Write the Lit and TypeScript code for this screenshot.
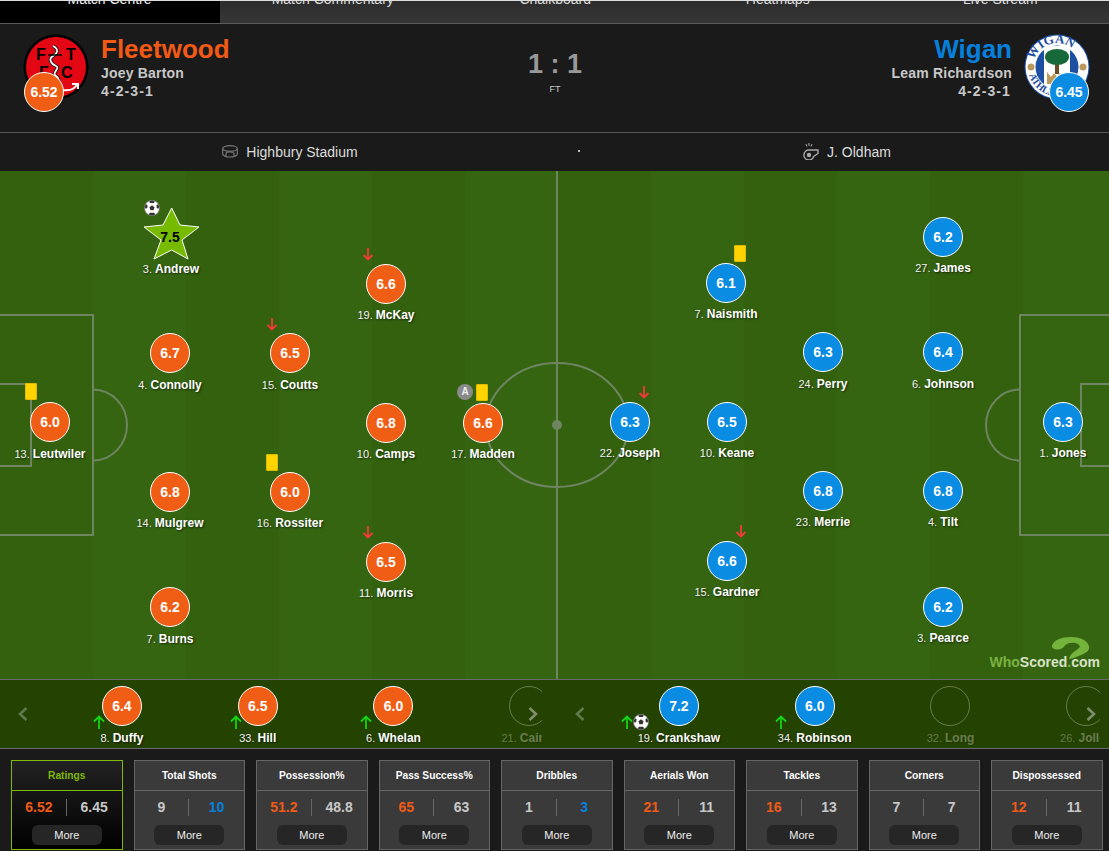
import { LitElement, css, html, svg } from "lit";
import { customElement } from "lit/decorators.js";

type Side = "home" | "away";

interface Player {
  no: number;
  name: string;
  rating: string;
  x: number;
  y: number;
  labelY: number;
  side: Side;
  star?: boolean;
  goal?: boolean;
  card?: [number, number];
  captain?: [number, number];
  off?: [number, number];
}

interface Sub {
  no: number;
  name: string;
  rating?: string;
  side: Side;
  arrow?: number;
  goal?: boolean;
  faded?: boolean;
}

const PITCH_TOP = 171;

const players: Player[] = [
  { no: 13, name: "Leutwiler", rating: "6.0", x: 50, y: 422, labelY: 454, side: "home", card: [31, 391] },
  { no: 3, name: "Andrew", rating: "7.5", x: 171, y: 237, labelY: 269, side: "home", star: true, goal: true },
  { no: 4, name: "Connolly", rating: "6.7", x: 170, y: 353, labelY: 385, side: "home" },
  { no: 14, name: "Mulgrew", rating: "6.8", x: 170, y: 492, labelY: 523, side: "home" },
  { no: 7, name: "Burns", rating: "6.2", x: 170, y: 607, labelY: 639, side: "home" },
  { no: 15, name: "Coutts", rating: "6.5", x: 290, y: 353, labelY: 385, side: "home", off: [272, 324] },
  { no: 16, name: "Rossiter", rating: "6.0", x: 290, y: 492, labelY: 523, side: "home", card: [272, 462] },
  { no: 19, name: "McKay", rating: "6.6", x: 386, y: 284, labelY: 315, side: "home", off: [368, 254] },
  { no: 10, name: "Camps", rating: "6.8", x: 386, y: 423, labelY: 454, side: "home" },
  { no: 11, name: "Morris", rating: "6.5", x: 386, y: 562, labelY: 593, side: "home", off: [368, 532] },
  { no: 17, name: "Madden", rating: "6.6", x: 483, y: 423, labelY: 454, side: "home", card: [482, 392], captain: [465, 392] },
  { no: 22, name: "Joseph", rating: "6.3", x: 630, y: 422, labelY: 453, side: "away", off: [644, 392] },
  { no: 10, name: "Keane", rating: "6.5", x: 727, y: 422, labelY: 453, side: "away" },
  { no: 7, name: "Naismith", rating: "6.1", x: 726, y: 283, labelY: 314, side: "away", card: [740, 253] },
  { no: 15, name: "Gardner", rating: "6.6", x: 727, y: 561, labelY: 592, side: "away", off: [741, 531] },
  { no: 24, name: "Perry", rating: "6.3", x: 823, y: 352, labelY: 384, side: "away" },
  { no: 23, name: "Merrie", rating: "6.8", x: 823, y: 491, labelY: 522, side: "away" },
  { no: 27, name: "James", rating: "6.2", x: 943, y: 237, labelY: 268, side: "away" },
  { no: 6, name: "Johnson", rating: "6.4", x: 943, y: 352, labelY: 384, side: "away" },
  { no: 4, name: "Tilt", rating: "6.8", x: 943, y: 491, labelY: 522, side: "away" },
  { no: 3, name: "Pearce", rating: "6.2", x: 943, y: 607, labelY: 638, side: "away" },
  { no: 1, name: "Jones", rating: "6.3", x: 1063, y: 422, labelY: 453, side: "away" },
];

const homeSubs: Sub[] = [
  { no: 8, name: "Duffy", rating: "6.4", side: "home", arrow: -23 },
  { no: 33, name: "Hill", rating: "6.5", side: "home", arrow: -22 },
  { no: 6, name: "Whelan", rating: "6.0", side: "home", arrow: -28 },
  { no: 21, name: "Cairns", side: "home", faded: true },
];

const awaySubs: Sub[] = [
  { no: 19, name: "Crankshaw", rating: "7.2", side: "away", arrow: -52, goal: true },
  { no: 34, name: "Robinson", rating: "6.0", side: "away", arrow: -34 },
  { no: 32, name: "Long", side: "away", faded: true },
  { no: 26, name: "Jolley", side: "away", faded: true },
];

const stats = [
  { title: "Ratings", home: "6.52", away: "6.45", lead: "", active: true },
  { title: "Total Shots", home: "9", away: "10", lead: "away" },
  { title: "Possession%", home: "51.2", away: "48.8", lead: "home" },
  { title: "Pass Success%", home: "65", away: "63", lead: "home" },
  { title: "Dribbles", home: "1", away: "3", lead: "away" },
  { title: "Aerials Won", home: "21", away: "11", lead: "home" },
  { title: "Tackles", home: "16", away: "13", lead: "home" },
  { title: "Corners", home: "7", away: "7", lead: "" },
  { title: "Dispossessed", home: "12", away: "11", lead: "home" },
];

const ball = (size: number) => html`<svg width=${size} height=${size} viewBox="0 0 24 24">
  <circle cx="12" cy="12" r="11.5" fill="#fff" stroke="#555" stroke-width="1" />
  <path d="M12 8l3.8 2.8-1.5 4.6H9.7l-1.5-4.6z" fill="#333" />
  <path d="M8 1.800C9.200 1.300 10.600 1 12 1s2.800.3 4 .8l-1 2.700h-6zM1.200 10.500c.2-1.500.8-3 1.600-4.300l2.500 1.200-.4 4.600-2.300 1.300zM22.800 10.500c-.2-1.500-.8-3-1.600-4.300l-2.500 1.200.4 4.600 2.300 1.300zM7.500 22c1.400.6 3 1 4.500 1s3.100-.4 4.500-1l-1-3h-7z" fill="#333" />
</svg>`;

const offArrow = (color: string, up: boolean) => html`<svg width="12" height="14" viewBox="0 0 12 14"
  fill="none" stroke=${color} stroke-width="1.8">
  ${up
    ? svg`<path d="M6 14V1.500M1 6.500l5-5 5 5" />`
    : svg`<path d="M6 1v11M1.500 8l4.500 4.500L10.500 8" />`}
</svg>`;

const fleetwoodCrest = html`<svg width="66" height="66" viewBox="0 0 66 66">
  <circle cx="33" cy="33" r="32.5" fill="#000" />
  <circle cx="33" cy="33" r="30" fill="#e30613" />
  <g font-family="Liberation Sans, sans-serif" font-weight="700" font-size="16" fill="#000">
    <text x="13" y="26">F</text>
    <text x="43" y="26">T</text>
    <text x="16" y="44">F</text>
    <text x="38" y="44">C</text>
  </g>
  <path d="M30 12c6 3 5 7 0 10s-2 8 3 10-5 7 0 10 2 6 0 10" stroke="#222" stroke-width="3.5" fill="none" />
  <path d="M30 12c6 3 5 7 0 10s-2 8 3 10-5 7 0 10 2 6 0 10" stroke="#fff" stroke-width="1.6" fill="none" />
  <path d="M25 21h14" stroke="#000" stroke-width="1.5" />
  <path d="M40 56c7 1 12-1 14-6m-5 0h6v5" stroke="#fff" stroke-width="2" fill="none" />
</svg>`;

const wiganCrest = html`<svg width="66" height="66" viewBox="0 0 66 66">
  <circle cx="33" cy="33" r="32.5" fill="#1d4fa3" />
  <circle cx="33" cy="33" r="31.5" fill="#fff" />
  <circle cx="33" cy="33" r="21.5" fill="#1d4fa3" />
  <rect x="20" y="12" width="26" height="42" fill="#fff" />
  <defs>
    <path id="wig-top" d="M9 33a24 24 0 0 1 48 0" />
    <path id="wig-btm" d="M4 33a29 29 0 0 0 58 0" />
  </defs>
  <text font-family="Liberation Serif, serif" font-weight="700" font-size="13" fill="#1d4fa3">
    <textPath href="#wig-top" startOffset="7">WIGAN</textPath>
  </text>
  <text font-family="Liberation Serif, serif" font-weight="700" font-size="10" fill="#1d4fa3">
    <textPath href="#wig-btm" startOffset="8">ATHLETIC</textPath>
  </text>
  <circle cx="7" cy="33" r="3.5" fill="#b99a5b" />
  <circle cx="59" cy="33" r="3.5" fill="#b99a5b" />
  <rect x="31" y="28" width="4" height="12" fill="#6b4a25" />
  <ellipse cx="33" cy="23" rx="12" ry="8" fill="#17693a" />
  <path d="M23 38l4 5 3-4 3 4 3-4 3 4 4-5v12H23z" fill="#b99a5b" />
</svg>`;

@customElement("app-root")
export class AppRoot extends LitElement {
  static styles = css`
    :host {
      display: block;
      height: 851px;
      overflow: hidden;
      background: #1a1a1a;
      font-family: "Liberation Sans", Arial, sans-serif;
      color: #fff;
    }

    .tabs {
      display: grid;
      grid-template-columns: repeat(5, 222.5px);
      margin-left: -1px;
      height: 22px;
      border-top: 1px solid #ddd;
      border-bottom: 1px solid #5a5a5a;
      overflow: hidden;
      background: linear-gradient(#2c2c2c, #363636);
    }
    .tab {
      margin-top: -11px;
      height: 33px;
      text-align: center;
      font-size: 14px;
      line-height: 19px;
      color: #ddd;
    }
    .tab.active {
      background: #000;
      color: #eee;
      margin-right: 1.5px;
    }

    .match {
      display: flex;
      justify-content: space-between;
      height: 108px;
      padding: 10px 19px 0 23px;
      box-sizing: border-box;
      position: relative;
    }
    .team {
      display: flex;
      gap: 12px;
    }
    .team.away {
      flex-direction: row-reverse;
      text-align: right;
    }
    .crest {
      position: relative;
      width: 66px;
      height: 66px;
    }
    .crest .badge {
      position: absolute;
      top: 38px;
      left: 1px;
    }
    .team.away .crest .badge {
      left: 25px;
    }
    .badge {
      width: 38px;
      height: 38px;
      border-radius: 50%;
      border: 1px solid #fff;
      display: flex;
      align-items: center;
      justify-content: center;
      font-size: 14px;
      font-weight: 700;
      color: #fff;
    }
    .home-bg {
      background: #f05e16;
    }
    .away-bg {
      background: #0a8ce2;
    }
    .team-name {
      font-size: 26px;
      font-weight: 700;
      line-height: 30px;
    }
    .team.home .team-name {
      color: #f05a16;
    }
    .team.away .team-name {
      color: #0680dc;
    }
    .manager,
    .form {
      font-size: 14px;
      font-weight: 700;
      line-height: 18px;
      color: #c8c8c8;
      letter-spacing: 0.2px;
    }
    .form {
      letter-spacing: 1.1px;
    }
    .team.away .form {
      margin-right: 1px;
    }
    .score {
      position: absolute;
      left: 1px;
      right: 0;
      top: 22px;
      text-align: center;
      color: #999;
    }
    .score b {
      display: block;
      font-size: 27px;
      line-height: 36px;
    }
    .score span {
      display: block;
      font-size: 9px;
      line-height: 12px;
      margin-top: 1px;
      color: #ccc;
    }

    .info {
      display: grid;
      grid-template-columns: 579px 1fr;
      height: 39px;
      padding-bottom: 1px;
      border-top: 1px solid #555;
      box-sizing: border-box;
      font-size: 14px;
      color: #ddd;
    }
    .info > div {
      display: flex;
      align-items: center;
      justify-content: center;
      gap: 8px;
      padding-left: 1px;
    }
    .info > div + div {
      position: relative;
      padding-left: 6px;
    }
    .info > div + div::before {
      content: "";
      position: absolute;
      left: -1px;
      top: 17px;
      width: 2px;
      height: 2px;
      background: #bbb;
    }

    .pitch {
      position: relative;
      height: 508px;
      overflow: hidden;
      background: repeating-linear-gradient(90deg, #33610e 0 93px, #366512 93px 186px);
    }
    .lines {
      position: absolute;
      inset: 0;
    }
    .player {
      position: absolute;
      width: 0;
    }
    .player .badge {
      position: absolute;
      left: -20px;
      top: -20px;
    }
    .label {
      position: absolute;
      white-space: nowrap;
      font-size: 11px;
      line-height: 14px;
      color: #f2f2f2;
      text-shadow: 1px 1px 2px rgba(0, 0, 0, 0.6);
      transform: translateX(-50%);
    }
    .label b {
      font-size: 12px;
      font-weight: 700;
      color: #fff;
    }
    .star {
      position: absolute;
      left: -28px;
      top: -30px;
    }
    .star-text {
      position: absolute;
      left: -21px;
      width: 40px;
      top: -8px;
      text-align: center;
      font-size: 14px;
      line-height: 16px;
      font-weight: 700;
      color: #000;
    }
    .over {
      position: absolute;
      line-height: 0;
    }
    .card {
      position: absolute;
      width: 12px;
      height: 17px;
      margin: -8px 0 0 -6px;
      border-radius: 2px;
      background: #ffd400;
      box-shadow: inset 0 0 0 1px #e2bb00;
    }
    .captain {
      position: absolute;
      width: 16px;
      height: 16px;
      margin: -8px 0 0 -8px;
      border-radius: 50%;
      background: #8a8a8a;
      color: #eee;
      font-size: 10px;
      line-height: 16px;
      text-align: center;
      font-weight: 700;
    }
    .logo {
      position: absolute;
      right: 9px;
      bottom: 9px;
      width: 112px;
      text-align: right;
      font-size: 14px;
      font-weight: 700;
      line-height: 16px;
      color: #d8e4c8;
      white-space: nowrap;
    }
    .logo i {
      font-style: normal;
      color: #7cb342;
    }
    .logo svg {
      position: absolute;
      right: 10px;
      bottom: 10px;
    }

    .subs {
      display: grid;
      grid-template-columns: 542px 543px;
      column-gap: 15px;
      height: 70px;
      border-top: 1px solid #6a6a6a;
      border-bottom: 1px solid #6a6a6a;
      box-sizing: border-box;
      background: #254300;
    }
    .carousel {
      position: relative;
      display: flex;
      padding-left: 54px;
      overflow: hidden;
    }
    .sub {
      position: relative;
      flex: 0 0 135.8px;
      display: flex;
      flex-direction: column;
      align-items: center;
      padding-top: 6px;
      box-sizing: border-box;
    }
    .sub.faded {
      opacity: 0.3;
    }
    .sub .empty {
      width: 38px;
      height: 38px;
      border-radius: 50%;
      border: 1px solid #fff;
    }
    .sub .label {
      position: static;
      transform: none;
      margin-top: 5px;
    }
    .sub .arrow {
      position: absolute;
      top: 35px;
      line-height: 0;
    }
    .sub .sub-ball {
      position: absolute;
      top: 34px;
      line-height: 0;
    }
    .chev {
      position: absolute;
      top: 26px;
      line-height: 0;
    }

    .stats {
      display: flex;
      gap: 11px;
      padding: 11px 11px 0;
    }
    .stat {
      flex: 0 0 111.5px;
      height: 90px;
      box-sizing: border-box;
      border: 1px solid #666;
      background: #3a3a3a;
      text-align: center;
    }
    .stat.active {
      border-color: #7fba00;
      background: linear-gradient(#222, #000);
    }
    .stat h4 {
      margin: 0;
      height: 30px;
      line-height: 29px;
      font-size: 10.2px;
      font-weight: 700;
      border-bottom: 1px solid #666;
      box-sizing: border-box;
      color: #fff;
    }
    .stat.active h4 {
      color: #7fba00;
      border-color: #7fba00;
    }
    .vals {
      display: grid;
      grid-template-columns: 1fr 1fr;
      margin-top: 8px;
      height: 17px;
      line-height: 17px;
      font-size: 14px;
      font-weight: 700;
      color: #c8c8c8;
    }
    .vals span:first-child {
      border-right: 1px solid #666;
    }
    .vals .home {
      color: #f05a16;
    }
    .vals .away {
      color: #0680dc;
    }
    .more {
      display: block;
      width: 70px;
      height: 20px;
      margin: 9px auto 0;
      border-radius: 6px;
      background: #262626;
      font-size: 11px;
      line-height: 20px;
      color: #eee;
    }
  `;

  private renderPlayer(p: Player) {
    const top = p.y - PITCH_TOP;
    return html`
      ${p.star
        ? html`<div class="player" style="left:${p.x}px;top:${top}px">
            <svg class="star" width="57" height="54" viewBox="0 0 57 54">
              <polygon points="28.7,1 37,18 56,20 39,33 45,52 28.7,43 11,52 18,33 1,20 20,18"
                fill="#77bb00" stroke="#fff" stroke-width="1" />
            </svg>
            <span class="star-text">${p.rating}</span>
          </div>`
        : html`<div class="player" style="left:${p.x}px;top:${top}px">
            <span class="badge ${p.side}-bg">${p.rating}</span>
          </div>`}
      <span class="label" style="left:${p.x}px;top:${p.labelY - PITCH_TOP - 7}px">${p.no}. <b>${p.name}</b></span>
      ${p.goal
        ? html`<span class="over" style="left:${p.x - 27}px;top:${top - 37}px">${ball(16)}</span>`
        : ""}
      ${p.card ? html`<span class="card" style="left:${p.card[0]}px;top:${p.card[1] - PITCH_TOP}px"></span>` : ""}
      ${p.captain
        ? html`<span class="captain" style="left:${p.captain[0]}px;top:${p.captain[1] - PITCH_TOP}px">A</span>`
        : ""}
      ${p.off
        ? html`<span class="over" style="left:${p.off[0] - 6}px;top:${p.off[1] - PITCH_TOP - 7}px">${offArrow("#f33a3a", false)}</span>`
        : ""}
    `;
  }

  private renderSub(s: Sub) {
    return html`<div class="sub ${s.faded ? "faded" : ""}">
      ${s.rating
        ? html`<span class="badge ${s.side}-bg">${s.rating}</span>`
        : html`<span class="empty"></span>`}
      <span class="label">${s.no}. <b>${s.name}</b></span>
      ${s.arrow !== undefined
        ? html`<span class="arrow" style="left:${68 + s.arrow - 6}px">${offArrow("#12d612", true)}</span>`
        : ""}
      ${s.goal ? html`<span class="sub-ball" style="left:${68 - 46}px">${ball(16)}</span>` : ""}
    </div>`;
  }

  private renderCarousel(subs: Sub[]) {
    return html`<div class="carousel">
      ${subs.map((s) => this.renderSub(s))}
      <span class="chev" style="left:17px">
        <svg width="12" height="16" viewBox="0 0 12 16" fill="none" stroke="#5f7a4c" stroke-width="2.5">
          <path d="M9.500 2L3 8l6.500 6" />
        </svg>
      </span>
      <span class="chev" style="right:3px">
        <svg width="12" height="16" viewBox="0 0 12 16" fill="none" stroke="#7f9070" stroke-width="2.5">
          <path d="M2.500 2L9 8l-6.500 6" />
        </svg>
      </span>
    </div>`;
  }

  render() {
    return html`
      <nav class="tabs">
        <div class="tab active">Match Centre</div>
        <div class="tab">Match Commentary</div>
        <div class="tab">Chalkboard</div>
        <div class="tab">Heatmaps</div>
        <div class="tab">Live Stream</div>
      </nav>

      <section class="match">
        <div class="team home">
          <div class="crest">
            ${fleetwoodCrest}
            <span class="badge home-bg">6.52</span>
          </div>
          <div>
            <div class="team-name">Fleetwood</div>
            <div class="manager">Joey Barton</div>
            <div class="form">4-2-3-1</div>
          </div>
        </div>
        <div class="score"><b>1 : 1</b><span>FT</span></div>
        <div class="team away">
          <div class="crest">
            ${wiganCrest}
            <span class="badge away-bg">6.45</span>
          </div>
          <div>
            <div class="team-name">Wigan</div>
            <div class="manager">Leam Richardson</div>
            <div class="form">4-2-3-1</div>
          </div>
        </div>
      </section>

      <section class="info">
        <div>
          <svg width="16" height="13" viewBox="0 0 16 13" fill="none" stroke="#777" stroke-width="1.2">
            <ellipse cx="8" cy="3.5" rx="7.3" ry="2.8" />
            <path d="M.7 3.500v5.500c0 1.600 3.300 3 7.300 3s7.300-1.400 7.300-3V3.500M4 8.500c0-2 8-2 8 0v3M4 8.500v3" />
          </svg>
          <span>Highbury Stadium</span>
        </div>
        <div>
          <svg width="16" height="17" viewBox="0 0 16 17" fill="none" stroke="#aaa" stroke-width="1.4">
            <path d="M15 7H6a5 5 0 1 0 4.700 6.500L15 10.500z" />
            <circle cx="6" cy="12" r="1.5" fill="#aaa" />
            <path d="M6 0v3M9 1l-1 2.500M3 1l1 2.500" stroke-width="1" />
          </svg>
          <span>J. Oldham</span>
        </div>
      </section>

      <section class="pitch">
        <svg class="lines" width="1109" height="508" viewBox="0 0 1109 508" fill="none" stroke="#6f8562" stroke-width="2">
          <path d="M557 0v508" />
          <ellipse cx="557" cy="254" rx="71" ry="62" />
          <circle cx="557" cy="254" r="5" fill="#6f8562" stroke="none" />
          <path d="M0 144h93v220H0M0 213h31v82H0" />
          <path d="M93 218.500A34 35.500 0 0 1 93 289.500" />
          <path d="M1109 144h-89v220h89M1109 213h-28v82h28" />
          <path d="M1020 218.500A34 35.500 0 0 0 1020 289.500" />
        </svg>
        ${players.map((p) => this.renderPlayer(p))}
        <div class="logo">
          <svg width="40" height="23" viewBox="0 0 40 24">
            <path d="M1 10C2 3 12 0 21 0c11 0 19 5 19 11 0 6-10 8-16 11l-5 1c1-6 8-9 11-12 1-3-3-5-8-5-4 0-7 2-9 5-4 3-11 3-12-1z" fill="#74b33c" />
          </svg>
          <i>Who</i>Scored<i>.</i>com
        </div>
      </section>

      <section class="subs">
        ${this.renderCarousel(homeSubs)}
        ${this.renderCarousel(awaySubs)}
      </section>

      <section class="stats">
        ${stats.map(
          (s) => html`<div class="stat ${s.active ? "active" : ""}">
            <h4>${s.title}</h4>
            <div class="vals">
              <span class=${s.active || s.lead === "home" ? "home" : ""}>${s.home}</span>
              <span class=${s.lead === "away" ? "away" : ""}>${s.away}</span>
            </div>
            <span class="more">More</span>
          </div>`
        )}
      </section>
    `;
  }
}
